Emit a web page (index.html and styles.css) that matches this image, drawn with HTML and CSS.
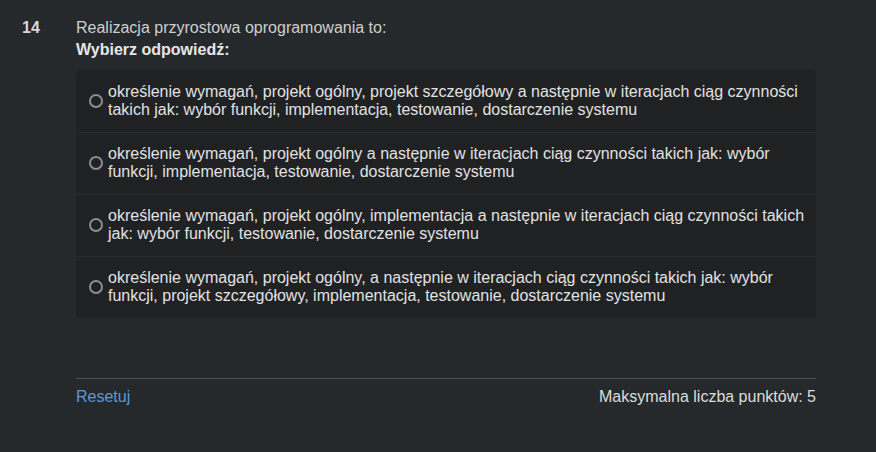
FILE: index.html
```html
<!DOCTYPE html>
<html lang="pl">
<head>
<meta charset="utf-8">
<link rel="stylesheet" href="styles.css">
</head>
<body>
<div class="question">
  <div class="qnum">14</div>
  <div class="qbody">
    <div class="qtext">Realizacja przyrostowa oprogramowania to:</div>
    <div class="prompt">Wybierz odpowiedź:</div>
    <div class="answers">
      <label class="answer"><span class="radio"></span><span class="atext">określenie wymagań, projekt ogólny, projekt szczegółowy a następnie w iteracjach ciąg czynności takich jak: wybór funkcji, implementacja, testowanie, dostarczenie systemu</span></label>
      <label class="answer"><span class="radio"></span><span class="atext">określenie wymagań, projekt ogólny a następnie w iteracjach ciąg czynności takich jak: wybór funkcji, implementacja, testowanie, dostarczenie systemu</span></label>
      <label class="answer"><span class="radio"></span><span class="atext">określenie wymagań, projekt ogólny, implementacja a następnie w iteracjach ciąg czynności takich jak: wybór funkcji, testowanie, dostarczenie systemu</span></label>
      <label class="answer"><span class="radio"></span><span class="atext">określenie wymagań, projekt ogólny, a następnie w iteracjach ciąg czynności takich jak: wybór funkcji, projekt szczegółowy, implementacja, testowanie, dostarczenie systemu</span></label>
    </div>
    <div class="footer">
      <a class="reset" href="#">Resetuj</a>
      <span class="maxpts">Maksymalna liczba punktów: 5</span>
    </div>
  </div>
</div>
</body>
</html>
```
FILE: styles.css
```css
html, body {
  margin: 0;
  padding: 0;
  background: #25292b;
  height: 100%;
}
body {
  font-family: "Liberation Sans", Arial, sans-serif;
  font-size: 16px;
  line-height: 18px;
  color: #dcdcdc;
}
.question {
  display: flex;
  padding: 19px 60px 0 22px;
}
.qnum {
  width: 54px;
  flex: none;
  font-weight: bold;
  color: #d8d8d8;
}
.qbody {
  flex: 1;
}
.qtext {
  color: #cfcfcf;
}
.prompt {
  margin-top: 4px;
  font-weight: bold;
  color: #e6e6e6;
}
.answers {
  margin-top: 11px;
  background: #1f2123;
  border-radius: 4px;
}
.answer {
  display: flex;
  align-items: center;
  padding: 12px 6px 13px 13px;
  border-top: 1px solid #2a2d30;
}
.answer:first-child {
  border-top: none;
  padding-top: 13px;
}
.radio {
  flex: none;
  width: 10px;
  height: 10px;
  border: 2px solid #8e8c93;
  border-radius: 50%;
  margin-right: 5px;
}
.atext {
  color: #e2e2e2;
}
.footer {
  margin-top: 60px;
  border-top: 1px solid #4a4c4e;
  display: flex;
  justify-content: space-between;
  padding-top: 9px;
}
.reset {
  color: #5a9ad6;
  text-decoration: none;
}
.maxpts {
  color: #dcdcdc;
}
```
